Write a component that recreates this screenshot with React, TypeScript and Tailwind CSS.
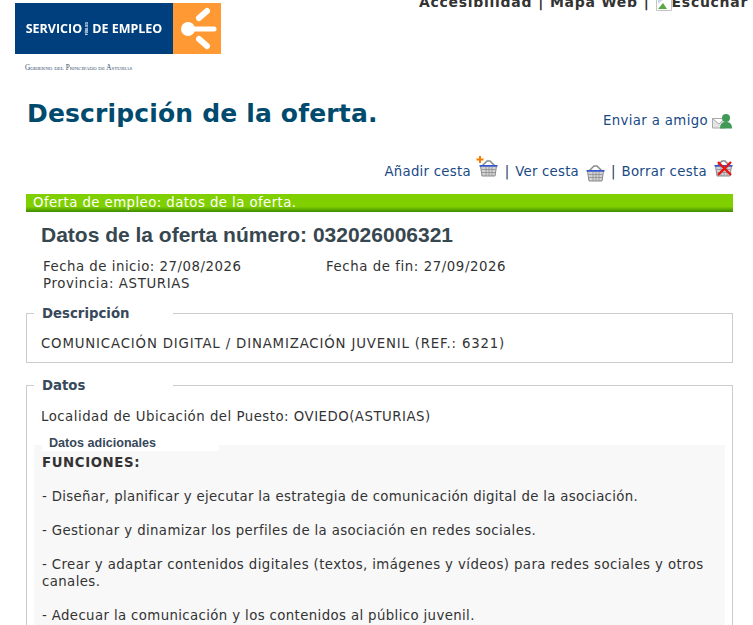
const Basket = ({ variant }: { variant?: "add" | "del" }) => (
  <svg width="19" height="17" viewBox="0 0 19 17" className="block overflow-visible">
    <path d="M3 6 L8 1 H11 L16 6" fill="none" stroke="#8a8a8a" strokeWidth="1.5" />
    <path d="M1.5 6 H17.5 L16 16 H3 Z" fill="#d2d2d2" stroke="#8a8a8a" strokeWidth="1" />
    <path d="M2.5 9.5 H16.5 M3 12.5 H16 M7 7 V16 M10 7 V16 M13 7 V16" stroke="#8f8f8f" strokeWidth="0.8" />
    <rect x="0.5" y="5" width="18" height="1.6" fill="#2f55d4" />
    {variant === "add" && <path d="M1 -4 V3 M-2.5 -0.5 H4.5" stroke="#f57c00" strokeWidth="2" />}
    {variant === "del" && <path d="M4 2 L17 15 M17 2 L4 15" stroke="#ee1111" strokeWidth="2.4" />}
  </svg>
);

const Sep = () => <span className="text-[#1a3a5c]">|</span>;

export default function App() {
  return (
    <div className="h-[625px] w-[753px] overflow-hidden bg-white font-['DejaVu_Sans',Verdana,sans-serif] text-[13.3px] leading-[17px] text-[#333]">
      <div className="flex items-start justify-between pl-[15px] pr-[5px] pt-[3px]">
        <div className="w-[206px]">
          <div className="flex h-[51px] w-[206px] blur-[0.3px]">
            <div className="flex w-[158px] items-center justify-center gap-[3px] bg-[#003f7d] font-['Open_Sans',Arial,sans-serif] text-[12.5px] font-bold whitespace-nowrap text-white">
              <span>SERVICIO</span>
              <span className="text-[3px] leading-[4px] [writing-mode:vertical-rl] rotate-180">PÚBLICO</span>
              <span>DE EMPLEO</span>
            </div>
            <div className="flex flex-1 items-center justify-center bg-[#ff9933]">
              <svg width="47" height="51" viewBox="0 0 47 51">
                <circle cx="14" cy="26" r="7" fill="#fff" />
                <path d="M14 26 H40" stroke="#fff" strokeWidth="5" strokeLinecap="round" />
                <path d="M25 15 L33 8 M25 36 L33 43" stroke="#fff" strokeWidth="6" strokeLinecap="round" />
              </svg>
            </div>
          </div>
          <div className="mt-[9px] ml-[10px] font-['Liberation_Serif',serif] text-[7.2px] leading-[10px] whitespace-nowrap text-[#35506e] [font-variant:small-caps]">
            Gobierno del Principado de Asturias
          </div>
        </div>
        <div className="-mt-[9px] flex items-center gap-[6px] text-[14px] font-bold tracking-[0.7px] whitespace-nowrap text-[#333]">
          <span>Accesibilidad</span>
          <span>|</span>
          <span>Mapa Web</span>
          <span>|</span>
          <span className="flex items-center">
            <svg width="16" height="16" viewBox="0 0 16 16" className="shrink-0">
              <path d="M0.5 0.5 H11 L15.5 5 V15.5 H0.5 Z" fill="#fff" stroke="#c4c4c4" />
              <path d="M2 14 L7 8 L11 14 Z" fill="#5aa845" />
              <path d="M2 2 H10 L2 9 Z" fill="#c5d8ee" />
            </svg>
            <span>Escuchar</span>
          </span>
        </div>
      </div>

      <div className="mt-[26px] flex items-start justify-between pl-[27px] pr-[20px]">
        <h1 className="text-[25px] leading-[30px] font-bold tracking-[0.16px] text-[#004a6e]">Descripción de la oferta.</h1>
        <div className="mt-[13px] flex items-center gap-[4px] tracking-[0.36px] text-[#1a4a86]">
          <span>Enviar a amigo</span>
          <svg width="21" height="16" viewBox="0 0 21 16">
            <path d="M0.5 5.5 H13 V15 H0.5 Z M0.5 5.5 L7 11 L13 5.5" fill="#e4e4e4" stroke="#a9a9a9" />
            <circle cx="14" cy="5" r="4" fill="#3f9a55" />
            <path d="M8 15.5 C8 10 11 9 14 9 C17 9 20 10 20 15.5 Z" fill="#3f9a55" />
          </svg>
        </div>
      </div>

      <div className="mt-[26px] flex items-start justify-end pr-[20px] text-[#1a4a86]">
        <span className="mt-[8px] tracking-[0.25px]">Añadir cesta</span>
        <span className="mt-[5px] ml-[8px]"><Basket variant="add" /></span>
        <span className="mt-[8px] mr-[6px] ml-[7px]"><Sep /></span>
        <span className="mt-[8px] tracking-[0.22px]">Ver cesta</span>
        <span className="mt-[10px] ml-[7px]"><Basket /></span>
        <span className="mt-[8px] mx-[6px]"><Sep /></span>
        <span className="mt-[8px] tracking-[0.33px]">Borrar cesta</span>
        <span className="mt-[5px] ml-[7px]"><Basket variant="del" /></span>
      </div>

      <div className="mr-[20px] ml-[26px] mt-[12px]">
        <div className="h-[18px] bg-gradient-to-b from-[#80d000] from-70% to-[#3f8a00] pl-[7px] text-[13.3px] leading-[17px] tracking-[0.43px] text-white">
          Oferta de empleo: datos de la oferta.
        </div>

        <h2 className="mt-[11px] ml-[15px] font-['Liberation_Sans',Arial,sans-serif] text-[21px] leading-[24px] font-bold text-[#37474f]">
          Datos de la oferta número: 032026006321
        </h2>

        <div className="mt-[11px] ml-[17px]">
          <div className="flex">
            <span className="w-[283px] tracking-[0.52px]">Fecha de inicio: 27/08/2026</span>
            <span className="tracking-[0.58px]">Fecha de fin: 27/09/2026</span>
          </div>
          <div className="tracking-[0.63px]">Provincia: ASTURIAS</div>
        </div>

        <fieldset className="mt-[13px] h-[58px] border border-[#ccc] pl-[14px]">
          <legend className="-ml-[7px] h-[17px] w-[139px] bg-white pl-[8px] text-[13.3px] leading-[17px] font-bold text-[#37495a]">Descripción</legend>
          <div className="mt-[13px] tracking-[0.84px]">COMUNICACIÓN DIGITAL / DINAMIZACIÓN JUVENIL (REF.: 6321)</div>
        </fieldset>

        <fieldset className="mt-[14px] border border-[#ccc] pl-[14px]">
          <legend className="-ml-[7px] h-[17px] w-[139px] bg-white pl-[8px] text-[13.3px] leading-[17px] font-bold text-[#37495a]">Datos</legend>
          <div className="mt-[14px] tracking-[0.5px]">Localidad de Ubicación del Puesto: OVIEDO(ASTURIAS)</div>
          <div className="relative mt-[20px] mr-[7px] -ml-[7px] bg-[#f8f8f8] pl-[8px] pr-[10px] pb-[40px]">
            <div className="absolute -top-[9px] left-[8px] h-[15px] w-[177px] bg-white pl-[7px] font-['Liberation_Sans',Arial,sans-serif] text-[12.6px] leading-[15px] font-bold text-[#37495a]">Datos adicionales</div>
            <div className="pt-[9px]">
              <div className="font-bold tracking-[0.6px]">FUNCIONES:</div>
              <p className="mt-[17px] tracking-[0.33px]">- Diseñar, planificar y ejecutar la estrategia de comunicación digital de la asociación.</p>
              <p className="mt-[17px] tracking-[0.38px]">- Gestionar y dinamizar los perfiles de la asociación en redes sociales.</p>
              <p className="mt-[17px] tracking-[0.41px]">- Crear y adaptar contenidos digitales (textos, imágenes y vídeos) para redes sociales y otros canales.</p>
              <p className="mt-[17px] tracking-[0.38px]">- Adecuar la comunicación y los contenidos al público juvenil.</p>
            </div>
          </div>
        </fieldset>
      </div>
    </div>
  );
}
